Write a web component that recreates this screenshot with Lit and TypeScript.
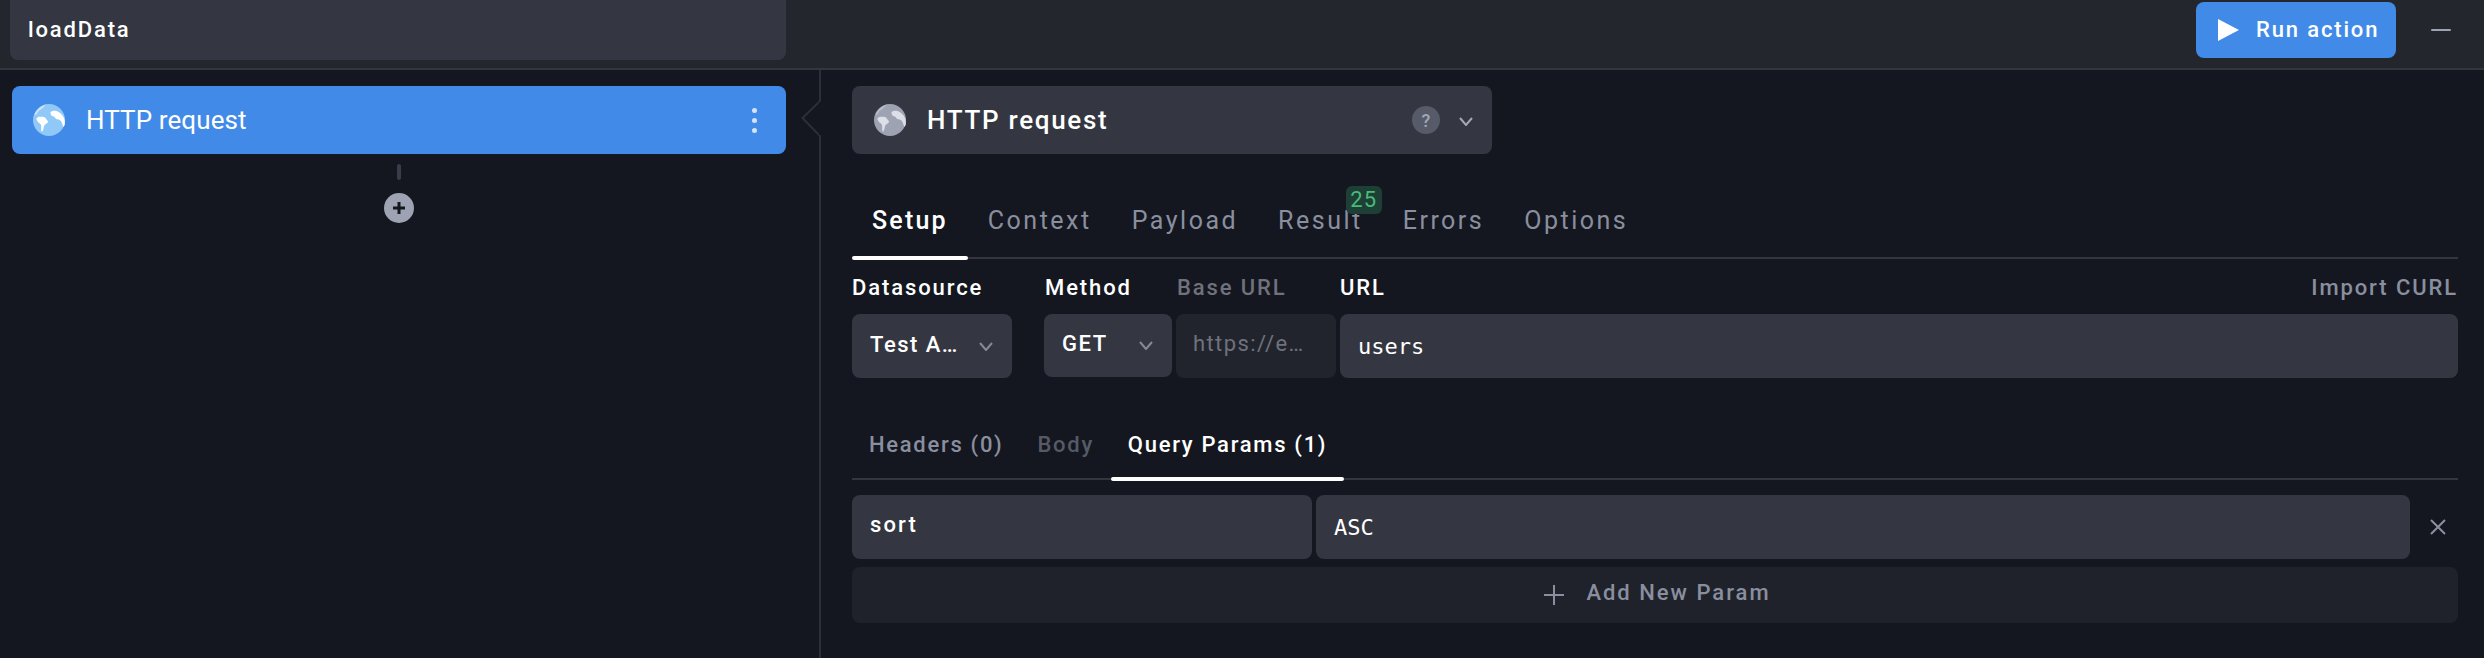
import { LitElement, html, css, svg } from "lit";
import { customElement } from "lit/decorators.js";

const globe = (sea: string, land: string, glow: string) => html`<svg class="globe" viewBox="0 0 32 32" aria-hidden="true">
  <circle cx="16" cy="16" r="16" fill="${sea}"/>
  <path fill="${glow}" d="M3 7.800C5.500 4 9 1.500 13.500.3c-2 1.500-3 3-4.500 4.200C7.300 6 5.500 6.500 4.500 8.500 4 9.500 3.500 10.500 2.500 11 1.500 10.500 2 9 3 7.800z"/>
  <path fill="${land}" d="M3.500 14.500c1-1.300 2.500-2 3.800-1.700 1 .2 1.500-.3 2.500-.1 1.500.3 2.700.6 3.200 2 .4 1 1.700 1.500 2 2.700.3 1.200-1.500 2-2.600 2.800-1.300 1-1.500 2.300-1.800 3.800-.2 1.300-.6 2.800-1.600 3.700-.7-.3-.8-1.400-.8-2.800 0-1.700.3-3.200-.5-4.500-.8-1.300-2.400-1.700-3.200-3.200C3.900 16.300 3.200 15.500 3.500 14.500z"/>
  <path fill="${land}" d="M17.500 8c1.500-1.200 3-1.400 4.500-1.300 1 .1 2 .2 2.800.7 2.700 1.500 5 3.800 6.300 6.600.6 1.600.9 3.500.8 5.600-.1 1.300-.6 2.700-1.600 3.500-.6-1.300-.9-2.600-1.400-4-.5-1.400-1.100-2.600-2.300-3.200-1.300-.6-2.700-.2-3.700-1.100-.9-.8-1-1.700-2.100-2.200-1.100-.5-2.300-.6-2.800-1.600-.3-.8 0-1.600-.5-2z"/>
</svg>`;

const chevron = svg`<path d="M1 1 7 8l6-7" fill="none" stroke="currentColor" stroke-width="2"/>`;
const chev = html`<svg class="chev" viewBox="0 0 14 9">${chevron}</svg>`;

@customElement("app-root")
export class AppRoot extends LitElement {
  static styles = css`
    :host { display: block; width: 2484px; height: 658px; background: #14171f; color: #fff; font-family: Roboto, "Noto Sans", sans-serif; overflow: hidden; }
    * { box-sizing: border-box; }
    .top { display: flex; align-items: flex-start; height: 70px; background: #24262e; border-bottom: 2px solid #33353f; padding-left: 10px; }
    .name { width: 776px; height: 60px; background: #343741; border-radius: 0 0 8px 8px; padding: 0 0 2px 18px; display: flex; align-items: center; font-size: 22px; font-weight: 500; letter-spacing: 1.850px; }
    .spacer { flex: 1; }
    .run { width: 200px; height: 56px; margin-top: 2px; background: #418ae8; border-radius: 8px; display: flex; align-items: center; padding-left: 22px; gap: 17px; font-size: 22px; font-weight: 500; letter-spacing: 1.850px; }
    .run span { padding-bottom: 2px; }
    .run svg { width: 21px; height: 22px; display: block; }
    .minimize { width: 20px; height: 2px; background: #9da3b3; margin: 29px 33px 0 35px; border-radius: 1px; }

    .main { position: relative; display: flex; height: 588px; }
    .left { width: 821px; border-right: 2px solid #2c2f38; display: flex; flex-direction: column; padding: 16px 33px 0 12px; align-items: center; }
    .card { width: 774px; height: 68px; flex: none; background: #418ae8; border-radius: 8px; display: flex; align-items: center; padding: 0 29px 0 21px; }
    .globe { width: 32px; height: 32px; flex: none; display: block; }
    .card-title { margin-left: 21px; flex: 1; font-size: 26px; letter-spacing: .1px; }
    .dots { display: flex; flex-direction: column; gap: 5px; }
    .dots i { width: 5px; height: 5px; border-radius: 50%; background: #d4e3f8; display: block; }
    .link { width: 4px; height: 16px; border-radius: 2px; background: #3a3d49; margin-top: 10px; }
    .add-step { width: 30px; height: 30px; border-radius: 50%; background: #9da3b3; margin-top: 13px; display: flex; align-items: center; justify-content: center; }
    .add-step svg { width: 14px; height: 14px; display: block; }
    .notch { position: absolute; left: 801px; top: 31px; width: 20px; height: 36px; display: block; }

    .right { flex: 1; padding: 16px 26px 0 31px; min-width: 0; }
    .select { width: 640px; height: 68px; background: #343741; border-radius: 8px; display: flex; align-items: center; padding-left: 22px; }
    .select-title { margin-left: 21px; flex: 1; font-size: 26px; font-weight: 500; letter-spacing: 1.700px; }
    .help { width: 28px; height: 28px; border-radius: 50%; background: #565a69; color: #a3a8b6; display: flex; align-items: center; justify-content: center; font-size: 18px; font-weight: 500; }
    .chev { display: block; width: 14px; height: 9px; color: #858a9b; flex: none; }
    .select .chev { margin: 2px 19px 0 19px; color: #a3a8b6; }

    .tabs { display: flex; margin-top: 49px; border-bottom: 2px solid #33353f; }
    .tab { position: relative; height: 54px; padding: 0 20px; line-height: 36px; font-size: 25px; letter-spacing: 2.500px; color: #8a8f9f; white-space: nowrap; }
    .tab.on { color: #fff; font-weight: 500; letter-spacing: 2.200px; }
    .tab.on::after { content: ""; position: absolute; left: 0; right: 0; bottom: -3px; height: 4px; border-radius: 2px; background: #fff; }
    .badge { position: absolute; top: -17px; right: 1px; width: 36px; height: 28px; border-radius: 6px; background: #1e3f36; color: #48bb78; font-size: 22px; line-height: 28px; text-align: center; letter-spacing: 1px; }

    .form { display: flex; margin-top: 13px; }
    .col { display: flex; flex-direction: column; gap: 10px; flex: none; }
    .c-ds { width: 160px; }
    .c-meth { width: 128px; margin-left: 32px; }
    .c-base { width: 160px; margin-left: 4px; }
    .c-url { flex: 1; margin-left: 4px; }
    .lab { font-size: 22px; line-height: 32px; font-weight: 500; letter-spacing: 1.900px; white-space: nowrap; }
    .lab.off { color: #6f727c; margin-left: 1px; }
    .lab.m { margin-left: 1px; }
    .lab.url { display: flex; justify-content: space-between; }
    .lab.url span:last-child { color: #8a8f9f; }
    .field { height: 64px; background: #343741; border-radius: 8px; display: flex; align-items: center; font-size: 22px; font-weight: 500; letter-spacing: 1.500px; }
    .ds { padding: 0 19px 0 18px; justify-content: space-between; white-space: nowrap; }
    .ds span { padding-bottom: 4px; }
    .meth { height: 63px; padding: 0 19px 0 18px; justify-content: space-between; }
    .meth span { padding-bottom: 4px; }
    .base { background: #21242c; padding: 0 0 6px 17px; color: #6f727c; font-weight: 400; letter-spacing: 1.400px; white-space: nowrap; }
    .url-f { padding-left: 18px; font-family: "DejaVu Sans Mono", monospace; font-weight: 400; font-size: 22px; letter-spacing: 0; }

    .subtabs { display: flex; margin-top: 49px; border-bottom: 2px solid #33353f; }
    .sub { position: relative; height: 51px; padding: 0 17px; line-height: 36px; font-size: 22px; font-weight: 500; letter-spacing: 1.700px; color: #8a8f9f; white-space: nowrap; }
    .sub.dim { color: #565a66; }
    .sub.on { color: #fff; }
    .sub.on::after { content: ""; position: absolute; left: 0; right: 0; bottom: -3px; height: 4px; border-radius: 2px; background: #fff; }

    .row { display: flex; margin-top: 15px; align-items: center; }
    .key { width: 460px; padding: 0 18px 6px; flex: none; letter-spacing: 2.100px; }
    .val { width: 1094px; margin-left: 4px; padding-left: 18px; font-family: "DejaVu Sans Mono", monospace; font-weight: 400; font-size: 22px; letter-spacing: 0; flex: none; }
    .x { width: 18px; height: 18px; margin-left: 19px; display: block; flex: none; color: #8b90a0; }
    .add { height: 56px; margin-top: 8px; padding-left: 4px; background: #1f222a; border-radius: 8px; display: flex; align-items: center; justify-content: center; gap: 21px; color: #8a8f9f; font-size: 22px; font-weight: 500; letter-spacing: 2px; }
    .add span { padding-bottom: 6px; }
    .add svg { width: 22px; height: 22px; display: block; }
  `;

  render() {
    return html`
      <div class="top">
        <div class="name">loadData</div>
        <div class="spacer"></div>
        <div class="run">
          <svg viewBox="0 0 21 22"><path d="M0 0 21 11 0 22z" fill="#fff"/></svg>
          <span>Run action</span>
        </div>
        <div class="minimize"></div>
      </div>
      <div class="main">
        <div class="left">
          <div class="card">
            ${globe("#90c8f8", "#ffffff", "#cfe6fb")}
            <div class="card-title">HTTP request</div>
            <div class="dots"><i></i><i></i><i></i></div>
          </div>
          <div class="link"></div>
          <div class="add-step">
            <svg viewBox="0 0 14 14"><path d="M7 1v12M1 7h12" stroke="#14171f" stroke-width="3" fill="none"/></svg>
          </div>
        </div>
        <svg class="notch" viewBox="0 0 20 36"><path d="M19 0 1.500 17 19 35" fill="#14171f" stroke="#2c2f38" stroke-width="2"/><rect x="18" y="1" width="2" height="33" fill="#14171f"/></svg>
        <div class="right">
          <div class="select">
            ${globe("#9da3b3", "#dcdfe5", "#b9bdc9")}
            <div class="select-title">HTTP request</div>
            <div class="help">?</div>
            ${chev}
          </div>
          <div class="tabs">
            <div class="tab on">Setup</div>
            <div class="tab">Context</div>
            <div class="tab">Payload</div>
            <div class="tab">Result<span class="badge">25</span></div>
            <div class="tab">Errors</div>
            <div class="tab">Options</div>
          </div>
          <div class="form">
            <div class="col c-ds">
              <div class="lab">Datasource</div>
              <div class="field ds"><span>Test A…</span>${chev}</div>
            </div>
            <div class="col c-meth">
              <div class="lab m">Method</div>
              <div class="field meth"><span>GET</span>${chev}</div>
            </div>
            <div class="col c-base">
              <div class="lab off">Base URL</div>
              <div class="field base">https://e…</div>
            </div>
            <div class="col c-url">
              <div class="lab url"><span>URL</span><span>Import CURL</span></div>
              <div class="field url-f">users</div>
            </div>
          </div>
          <div class="subtabs">
            <div class="sub">Headers (0)</div>
            <div class="sub dim">Body</div>
            <div class="sub on">Query Params (1)</div>
          </div>
          <div class="row">
            <div class="field key">sort</div>
            <div class="field val">ASC</div>
            <svg class="x" viewBox="0 0 18 18"><path d="M2 2l14 14M16 2 2 16" stroke="currentColor" stroke-width="2" fill="none"/></svg>
          </div>
          <div class="add">
            <svg viewBox="0 0 22 22"><path d="M11 1v20M1 11h20" stroke="currentColor" stroke-width="2" fill="none"/></svg>
            <span>Add New Param</span>
          </div>
        </div>
      </div>
    `;
  }
}
